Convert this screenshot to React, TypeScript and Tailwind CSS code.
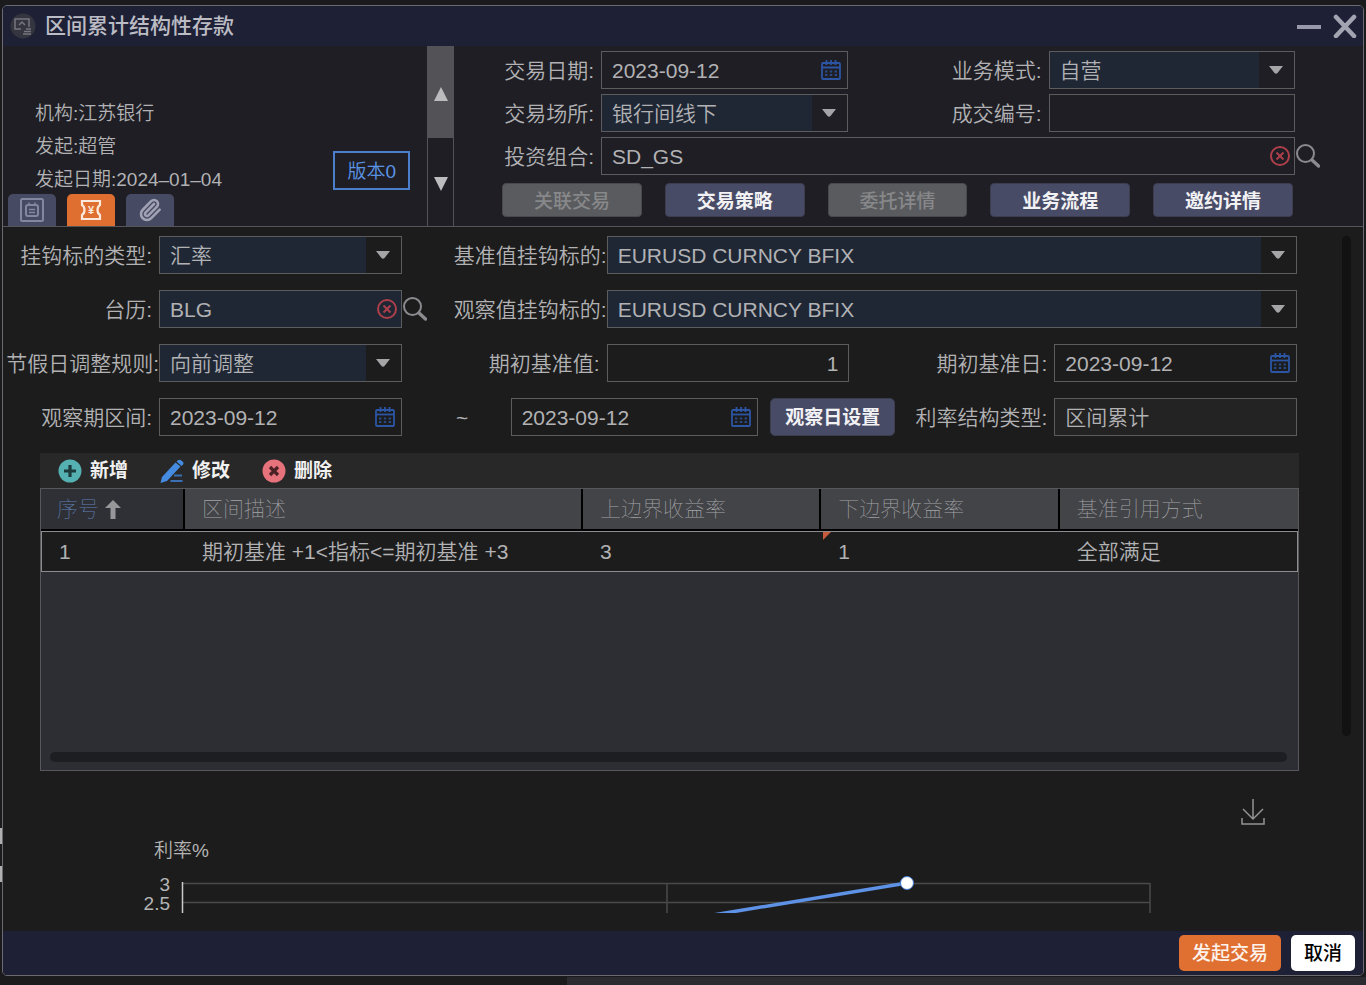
import { ReactNode, useState } from "react";
import { Paperclip } from "lucide-react";

interface FieldProps {
  id: string;
  label: string;
  value?: string;
  labelClass?: string;
  cellClass?: string;
  inputClass?: string;
  children?: ReactNode;
}

interface Range {
  id: number;
  desc: string;
  upper: string;
  lower: string;
  mode: string;
}

const ranges: Range[] = [
  {
    id: 1,
    desc: "期初基准 +1<指标<=期初基准 +3",
    upper: "3",
    lower: "1",
    mode: "全部满足",
  },
];

const columns = ["区间描述", "上边界收益率", "下边界收益率", "基准引用方式"];

const actions = [
  { name: "关联交易", disabled: true },
  { name: "交易策略", disabled: false },
  { name: "委托详情", disabled: true },
  { name: "业务流程", disabled: false },
  { name: "邀约详情", disabled: false },
];

const CalendarIcon = () => (
  <svg width="20" height="20" viewBox="0 0 20 20" fill="none" stroke="#2c55a4">
    <rect x="1" y="3" width="18" height="16" rx="1" strokeWidth="1.8" />
    <path d="M1 7.5h18" strokeWidth="1.8" />
    <path d="M5.500 0v5M10 0v5M14.500 0v5" strokeWidth="1.8" />
    <path d="M4 11.500h12M4 15h12" strokeWidth="1.800" strokeDasharray="2.400 2.400" strokeOpacity="0.8" />
  </svg>
);

const ClearIcon = () => (
  <svg width="20" height="20" viewBox="0 0 20 20" fill="none" stroke="#ad3f4b" strokeWidth="2">
    <circle cx="10" cy="10" r="9" />
    <path d="M6.5 6.5l7 7M13.5 6.5l-7 7" />
  </svg>
);

const SearchIcon = () => (
  <svg width="24" height="24" viewBox="0 0 24 24" fill="none" stroke="#8b8b8f">
    <circle cx="9.5" cy="9.5" r="8.5" strokeWidth="2" />
    <path d="M16 16l6.5 6" strokeWidth="3.4" strokeLinecap="round" />
  </svg>
);

const Label = ({ id, label, className = "pr-[7px]" }: { id: string; label: string; className?: string }) => (
  <label htmlFor={id} className={`whitespace-nowrap pt-[2px] text-right ${className}`}>
    {label}:
  </label>
);

const TextField = ({ id, label, value = "", labelClass, cellClass = "", inputClass = "", children }: FieldProps) => (
  <>
    <Label id={id} label={label} className={labelClass} />
    <div className={`relative flex h-[38px] min-w-0 border border-[#5c5c5f] ${cellClass}`}>
      <input
        id={id}
        type="text"
        defaultValue={value}
        className={`w-full min-w-0 px-[10px] pt-[2px] outline-none ${inputClass}`}
      />
      {children}
    </div>
  </>
);

const DateBox = ({ id, value, label }: { id: string; value: string; label?: string }) => (
  <div className="flex h-[38px] min-w-0 flex-1 items-center border border-[#5c5c5f] pr-[6px]">
    <input
      id={id}
      type="text"
      aria-label={label}
      defaultValue={value}
      className="w-full min-w-0 pl-[10px] pt-[2px] outline-none"
    />
    <button type="button" aria-label="选择日期" className="shrink-0">
      <CalendarIcon />
    </button>
  </div>
);

const SelectField = ({ id, label, value, labelClass, cellClass = "" }: FieldProps) => (
  <>
    <Label id={id} label={label} className={labelClass} />
    <div className={`relative flex h-[38px] min-w-0 border border-[#5c5c5f] pr-[35px] ${cellClass}`}>
      <select id={id} className="w-full min-w-0 appearance-none bg-[#1f2734] px-[10px] pt-[2px] outline-none">
        <option>{value}</option>
      </select>
      <svg className="pointer-events-none absolute right-[11px] top-[14px]" width="14" height="8" viewBox="0 0 14 8">
        <path d="M0 0h14L8.5 7q-1.5 1.5-3 0z" fill="#a5a5a7" />
      </svg>
    </div>
  </>
);

const ClearAndSearch = () => (
  <>
    <button type="button" aria-label="清除" className="absolute right-[4px] top-[8px]">
      <ClearIcon />
    </button>
    <button type="button" aria-label="搜索" className="absolute left-full top-[6px] ml-[2px]">
      <SearchIcon />
    </button>
  </>
);

const TitleBar = () => (
  <header className="flex h-10 items-center bg-[#1e2136] pl-[7px] pr-[6px]">
    <svg width="26" height="26" viewBox="0 0 26 26" fill="none" stroke="#75767f">
      <circle cx="13" cy="13" r="12.5" fill="#34353f" stroke="none" />
      <path d="M11 16H5V6h14v8" strokeWidth="1.5" />
      <path d="M9 12l3-3 3 3" strokeWidth="1.5" />
      <path d="M16 16h5M14 18.5h7M13 21h8" strokeWidth="1.5" />
    </svg>
    <h1 className="ml-[9px] flex-1 font-medium text-[#bcbcc4]">区间累计结构性存款</h1>
    <button type="button" aria-label="最小化" className="mr-3">
      <svg width="24" height="24" viewBox="0 0 24 24" stroke="#9899ab" strokeWidth="4">
        <path d="M0 13h24" />
      </svg>
    </button>
    <button type="button" aria-label="关闭">
      <svg width="24" height="24" viewBox="0 0 24 24" stroke="#a3a4b2" strokeWidth="4.5" strokeLinecap="round">
        <path d="M3 3l18 19M21 3L3 22" />
      </svg>
    </button>
  </header>
);

const Tabs = () => {
  const [active, setActive] = useState(1);
  const icons = [
    <svg key="detail" width="24" height="24" viewBox="0 0 24 24" fill="none" stroke="#8387a0" strokeWidth="2">
      <rect x="1" y="1" width="22" height="22" rx="1.5" />
      <rect x="6" y="7" width="12" height="11" rx="2" />
      <path d="M9 4.5v3M15 4.5v3M9 11.5h6M9 14.5h6" strokeWidth="1.6" />
    </svg>,
    <svg key="deal" width="22" height="22" viewBox="0 0 22 22" fill="none" stroke="#fbe9dd" strokeWidth="2.2">
      <path d="M2 2h18v4q-2.5 1.5-2.5 5t2.5 5v4H2v-4q2.5-1.500 2.5-5T2 6z" />
      <text x="11" y="15" textAnchor="middle" fontSize="11" fill="#fbe9dd" stroke="none" fontWeight="700">
        ¥
      </text>
    </svg>,
    <Paperclip key="files" size={24} strokeWidth={2.6} color="#a0a2b4" />,
  ];
  return (
    <div role="tablist" className="flex gap-[11px] pl-[5px]">
      {icons.map((icon, index) => (
        <button
          key={index}
          type="button"
          role="tab"
          aria-label={["详情", "交易", "附件"][index]}
          aria-selected={active === index}
          onClick={() => setActive(index)}
          className={`flex h-8 w-12 items-center justify-center rounded-t-[5px] ${
            active === index ? "bg-[#df6e31]" : "bg-[#474a63]"
          }`}
        >
          {icon}
        </button>
      ))}
    </div>
  );
};

const Summary = () => (
  <section className="flex border-b border-[#56565a] bg-[#1e1e24]">
    <div className="flex w-[424px] flex-col justify-end">
      <div className="-mb-[2px] flex items-end pl-8 pr-[17px] text-[19px] leading-[33px]">
        <div className="flex-1">
          <p>机构:江苏银行</p>
          <p>发起:超管</p>
          <p>发起日期:2024–01–04</p>
        </div>
        <button type="button" className="mb-[6px] border-2 border-[#4b7ecb] px-3 pt-[2px] leading-[33px] text-[#5b93e4]">
          版本0
        </button>
      </div>
      <Tabs />
    </div>
    <div className="flex w-[27px] flex-col border-x border-[#525257]">
      <button type="button" aria-label="向上" className="flex h-[92px] items-center justify-center bg-[#525257] pt-1">
        <svg width="14" height="14" viewBox="0 0 14 14" fill="#bcbcbe">
          <path d="M7 0l7 14H0z" />
        </svg>
      </button>
      <button type="button" aria-label="向下" className="flex flex-1 items-center justify-center pt-1">
        <svg width="14" height="14" viewBox="0 0 14 14" fill="#bcbcbe">
          <path d="M0 0h14L7 14z" />
        </svg>
      </button>
    </div>
    <div className="min-w-0 flex-1 pb-[9px] pl-12 pr-[68px] pt-[5px]">
      <div className="grid grid-cols-[99px_1fr_201px_1fr] items-center gap-y-[5px]">
        <Label id="tradeDate" label="交易日期" />
        <DateBox id="tradeDate" value="2023-09-12" />
        <SelectField id="bizMode" label="业务模式" value="自营" />
        <SelectField id="venue" label="交易场所" value="银行间线下" />
        <TextField id="dealNo" label="成交编号" />
        <TextField id="portfolio" label="投资组合" value="SD_GS" cellClass="col-span-3">
          <ClearAndSearch />
        </TextField>
      </div>
      <div className="mt-2 flex gap-[23px] pr-[2px]">
        {actions.map((item) => (
          <button
            key={item.name}
            type="button"
            disabled={item.disabled}
            className="h-[34px] min-w-0 flex-1 rounded-[4px] border border-[#3c3e50] bg-[#484b66] pt-1 text-[19px] font-bold text-[#f2f2f5] disabled:border-[#48494d] disabled:bg-[#5a5b5e] disabled:font-medium disabled:text-[#87888a]"
          >
            {item.name}
          </button>
        ))}
      </div>
    </div>
  </section>
);

const DealForm = () => (
  <form className="grid grid-cols-[156px_1fr_205px_1fr_205px_1fr] items-center gap-y-4 pr-[45px]">
    <SelectField id="linkType" label="挂钩标的类型" value="汇率" />
    <SelectField id="baseLink" label="基准值挂钩标的" value="EURUSD CURNCY BFIX" labelClass="pr-0" cellClass="col-span-3" />

    <TextField id="calendar" label="台历" value="BLG" inputClass="bg-[#1f2734]">
      <ClearAndSearch />
    </TextField>
    <SelectField id="watchLink" label="观察值挂钩标的" value="EURUSD CURNCY BFIX" labelClass="pr-0" cellClass="col-span-3" />

    <SelectField id="holiday" label="节假日调整规则" value="向前调整" labelClass="pr-0" />
    <TextField id="baseValue" label="期初基准值" value="1" inputClass="text-right" />
    <Label id="baseDate" label="期初基准日" />
    <DateBox id="baseDate" value="2023-09-12" />

    <Label id="watchFrom" label="观察期区间" />
    <DateBox id="watchFrom" value="2023-09-12" />
    <div className="col-span-3 flex items-center">
      <span className="w-[109px] pl-3 pt-[2px] text-center">~</span>
      <DateBox id="watchTo" value="2023-09-12" label="观察期结束" />
      <button
        type="button"
        className="ml-3 h-[38px] w-[125px] rounded-[5px] border border-[#3c3e50] bg-[#484b66] pt-[2px] text-[19px] font-bold text-[#f2f2f5]"
      >
        观察日设置
      </button>
      <Label id="rateType" label="利率结构类型" className="w-[159px] pr-[7px]" />
    </div>
    <div className="flex h-[38px] border border-[#5c5c5f] bg-[#232323]">
      <input
        id="rateType"
        type="text"
        readOnly
        value="区间累计"
        className="w-full min-w-0 px-[10px] pt-[2px] outline-none"
      />
    </div>
  </form>
);

const Toolbar = () => (
  <div className="flex h-[35px] items-center gap-8 bg-[#282828] pl-[18px] text-[19px] font-bold text-[#f0f0f0]">
    <button type="button" className="flex items-center gap-2">
      <svg width="24" height="24" viewBox="0 0 24 24">
        <circle cx="12" cy="12" r="11.5" fill="#55b0b1" />
        <path d="M12 6v12M6 12h12" stroke="#1d3a3c" strokeWidth="3.2" />
      </svg>
      新增
    </button>
    <button type="button" className="flex items-center gap-2">
      <svg width="24" height="24" viewBox="0 0 24 24" fill="#458be0">
        <path d="M15.5 3.5l5 4L7 22l-6.5 2L2 18z" />
        <path d="M16.5 2.5q3-3.5 6 0 2.500 2-1 4.500z" />
        <path d="M14 16.5h8M10.5 22h12" stroke="#3a6fb2" strokeWidth="2" />
      </svg>
      修改
    </button>
    <button type="button" className="flex items-center gap-2">
      <svg width="24" height="24" viewBox="0 0 24 24">
        <circle cx="12" cy="12" r="11.5" fill="#e6727c" />
        <path d="M8 8l8 8M16 8l-8 8" stroke="#4a2226" strokeWidth="3.2" />
      </svg>
      删除
    </button>
  </div>
);

const RangeTable = () => (
  <section className="ml-[37px] mr-[43px] mt-[17px]">
    <Toolbar />
    <div className="flex min-h-[283px] flex-col justify-between border border-[#57575c] bg-[#2d2e33]">
      <table className="w-full table-fixed border-separate border-spacing-0 text-left">
        <thead>
          <tr className="h-[42px]">
            <th className="w-[144px] border-b-2 border-r-2 border-black bg-[#2f3035] pl-4 font-thin text-[#5f80b4]">
              <span className="flex items-center gap-[6px]">
                序号
                <svg width="16" height="19" viewBox="0 0 16 19" fill="#97979a">
                  <path d="M8 0l8 8h-5.5v11h-5V8H0z" />
                </svg>
              </span>
            </th>
            {columns.map((name, index) => (
              <th
                key={name}
                className={`border-b-2 border-black bg-[#434448] pl-[17px] font-thin text-[#a2a3a6] ${
                  index === 0 ? "w-[398px]" : ""
                } ${index < columns.length - 1 ? "border-r-2" : ""}`}
              >
                {name}
              </th>
            ))}
          </tr>
        </thead>
        <tbody>
          {ranges.map((row) => (
            <tr key={row.id} className="h-[41px] bg-[#1c1c1c] [&>td]:border-y [&>td]:border-[#8c8c8e] [&>td]:pl-[17px]">
              <td className="border-l">{row.id}</td>
              <td>{row.desc}</td>
              <td>{row.upper}</td>
              <td className="relative">
                {/* edited marker */}
                <span className="absolute left-[2px] top-0 border-r-8 border-t-8 border-r-transparent border-t-[#c75a3c]" />
                {row.lower}
              </td>
              <td className="border-r">{row.mode}</td>
            </tr>
          ))}
        </tbody>
      </table>
      <div className="mb-2 ml-[9px] mr-[11px] h-[10px] rounded-full bg-[#1d1e22]" />
    </div>
  </section>
);

const RateChart = () => (
  <section>
    <div className="flex justify-end pr-[77px] pt-7">
      <button type="button" aria-label="下载">
        <svg width="24" height="26" viewBox="0 0 24 26" fill="none" stroke="#929292" strokeWidth="1.5">
          <path d="M12 0v20M2 10l10 10 10-10M1 19v6h22v-6" />
        </svg>
      </button>
    </div>
    <svg viewBox="0 0 1339 88" className="block h-auto w-full">
      <g stroke="#4a4a4a" strokeWidth="1.5">
        <path d="M179 58.5H1147M179 77.5H1147" />
        <path d="M664 58V88M1147 58V88" />
      </g>
      <path d="M179.5 57V88" stroke="#c9c9c9" strokeWidth="1.5" />
      <path d="M710 90L904 58" stroke="#5d92e6" strokeWidth="3.5" />
      <circle cx="904" cy="58" r="6.5" fill="#fff" stroke="#3f78d0" strokeWidth="1" />
      <g fill="#b4b4b4" fontSize="19">
        <text x="151" y="32">利率%</text>
        <text x="167" y="66" textAnchor="end">3</text>
        <text x="167" y="85" textAnchor="end">2.5</text>
      </g>
    </svg>
  </section>
);

const App = () => {
  return (
    <div className="relative min-h-screen bg-[#1b1b1d] px-[2px] pb-[9px] pt-[5px] font-['Liberation_Sans','Noto_Sans_CJK_SC',sans-serif] text-[21px] font-[350] leading-7 text-[#b2b2b4]">
      {/* edges of the screen behind the dialog */}
      <span className="absolute left-0 top-[828px] h-4 w-[2px] bg-[#b0b0b0]" />
      <span className="absolute left-0 top-[866px] h-4 w-[2px] bg-[#b0b0b0]" />
      <span className="absolute bottom-0 left-[567px] right-0 h-2 bg-[#2b2b31]" />

      <div className="relative overflow-hidden rounded-[5px] border border-[#6a6a70] bg-[#1c1c1c]">
        <TitleBar />
        <Summary />
        <div className="flex pb-[18px] pr-3 pt-[9px]">
          <main className="min-w-0 flex-1">
            <DealForm />
            <RangeTable />
            <RateChart />
          </main>
          <div className="h-[500px] w-[9px] rounded-full bg-[#121212]" />
        </div>
        <footer className="flex h-11 items-center justify-end gap-[10px] bg-[#1e2136] pr-2 text-[19px] font-medium">
          <button type="button" className="h-9 rounded-[5px] bg-[#e06f32] px-[13px] pt-[2px] text-[#fdf3ec]">
            发起交易
          </button>
          <button type="button" className="h-9 rounded-[5px] bg-white px-[13px] pt-[2px] text-black">
            取消
          </button>
        </footer>
      </div>
    </div>
  );
};

export default App;
